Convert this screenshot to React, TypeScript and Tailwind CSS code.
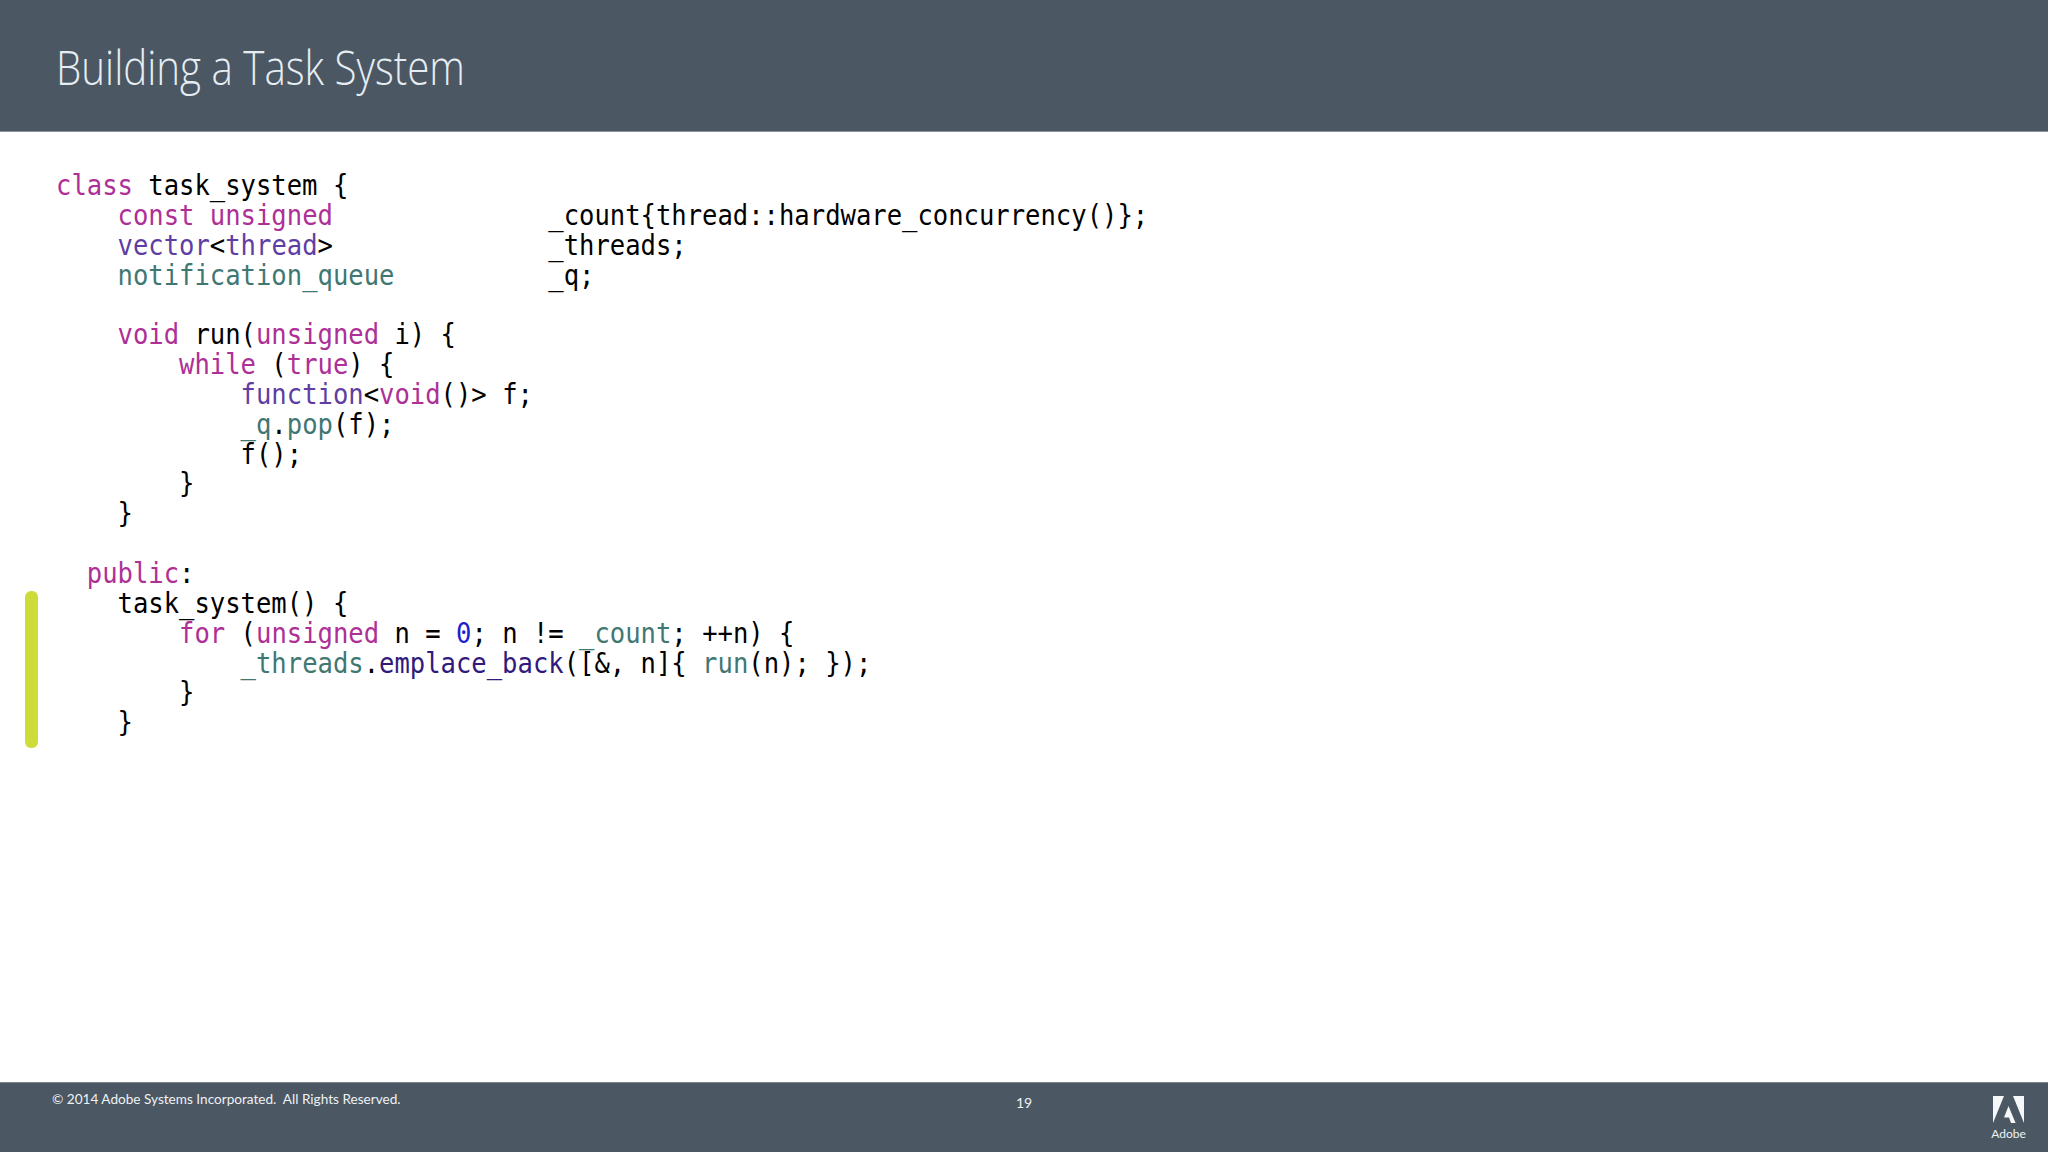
const K = "text-[#ae2f96]";
const T = "text-[#5f3ea3]";
const G = "text-[#3f7773]";
const F = "text-[#321a7c]";
const N = "text-[#1c20cf]";

type Seg = [string, string?];
const lines: Seg[][] = [
  [["class", K], [" task_system {"]],
  [["    "], ["const unsigned", K], ["              _count{thread::hardware_concurrency()};"]],
  [["    "], ["vector", T], ["<"], ["thread", T], [">"], ["              _threads;"]],
  [["    "], ["notification_queue", G], ["          _q;"]],
  [[" "]],
  [["    "], ["void", K], [" run("], ["unsigned", K], [" i) {"]],
  [["        "], ["while", K], [" ("], ["true", K], [") {"]],
  [["            "], ["function", T], ["<"], ["void", K], ["()> f;"]],
  [["            "], ["_q", G], ["."], ["pop", G], ["(f);"]],
  [["            f();"]],
  [["        }"]],
  [["    }"]],
  [[" "]],
  [["  "], ["public", K], [":"]],
  [["    task_system() {"]],
  [["        "], ["for", K], [" ("], ["unsigned", K], [" n = "], ["0", N], ["; n != "], ["_count", G], ["; ++n) {"]],
  [["            "], ["_threads", G], ["."], ["emplace_back", F], ["([&, n]{ "], ["run", G], ["(n); });"]],
  [["        }"]],
  [["    }"]],
];

export default function App() {
  return (
    <div className="relative flex h-[1152px] w-full flex-col overflow-hidden bg-white">
      <header className="flex h-[132px] shrink-0 items-center border-b border-[#8a929a] bg-[#4b5763] pl-[56px] pt-[4px]">
        <h1 className="origin-left scale-x-[0.857] font-['Open_Sans',sans-serif] text-[47px] font-light leading-none whitespace-nowrap text-[#e6edf2]">
          Building a Task System
        </h1>
      </header>
      <main className="flex-1 pl-[55.5px] pt-[39px]">
        <div className="origin-left scale-x-[0.8965] font-['DejaVu_Sans_Mono',monospace] text-[28.5px] leading-[29.85px] text-black">
          {lines.map((segs, i) => (
            <div key={i} className="h-[29.85px] whitespace-pre">
              {segs.map(([text, cls], j) => (
                <span key={j} className={cls}>
                  {text}
                </span>
              ))}
            </div>
          ))}
        </div>
      </main>
      <div className="absolute left-[25px] top-[591px] h-[157px] w-[13px] rounded-md bg-[#cddc39]" />
      <footer className="relative flex h-[70px] shrink-0 justify-between border-t border-[#7d858d] bg-[#4b5763] pl-[52px] pr-[24px] font-['Lato','Open_Sans',sans-serif] text-[#eef2f5]">
        <p className="pt-[6px] text-[13.6px] leading-5 whitespace-pre">© 2014 Adobe Systems Incorporated.  All Rights Reserved.</p>
        <p className="absolute left-1/2 top-[10px] -translate-x-1/2 text-[14px] leading-5">19</p>
        <div className="flex w-[31px] flex-col items-center pt-[13px]">
          <svg width="31" height="27" viewBox="0 0 31 27" fill="#f5f7f8">
            <path d="M0 0H11L0 27Z" />
            <path d="M20 0H31V27Z" />
            <path d="M15.5 10L22.6 27H18L16 21.6H11Z" />
          </svg>
          <span className="mt-[3px] text-[12px] leading-4">Adobe</span>
        </div>
      </footer>
    </div>
  );
}
